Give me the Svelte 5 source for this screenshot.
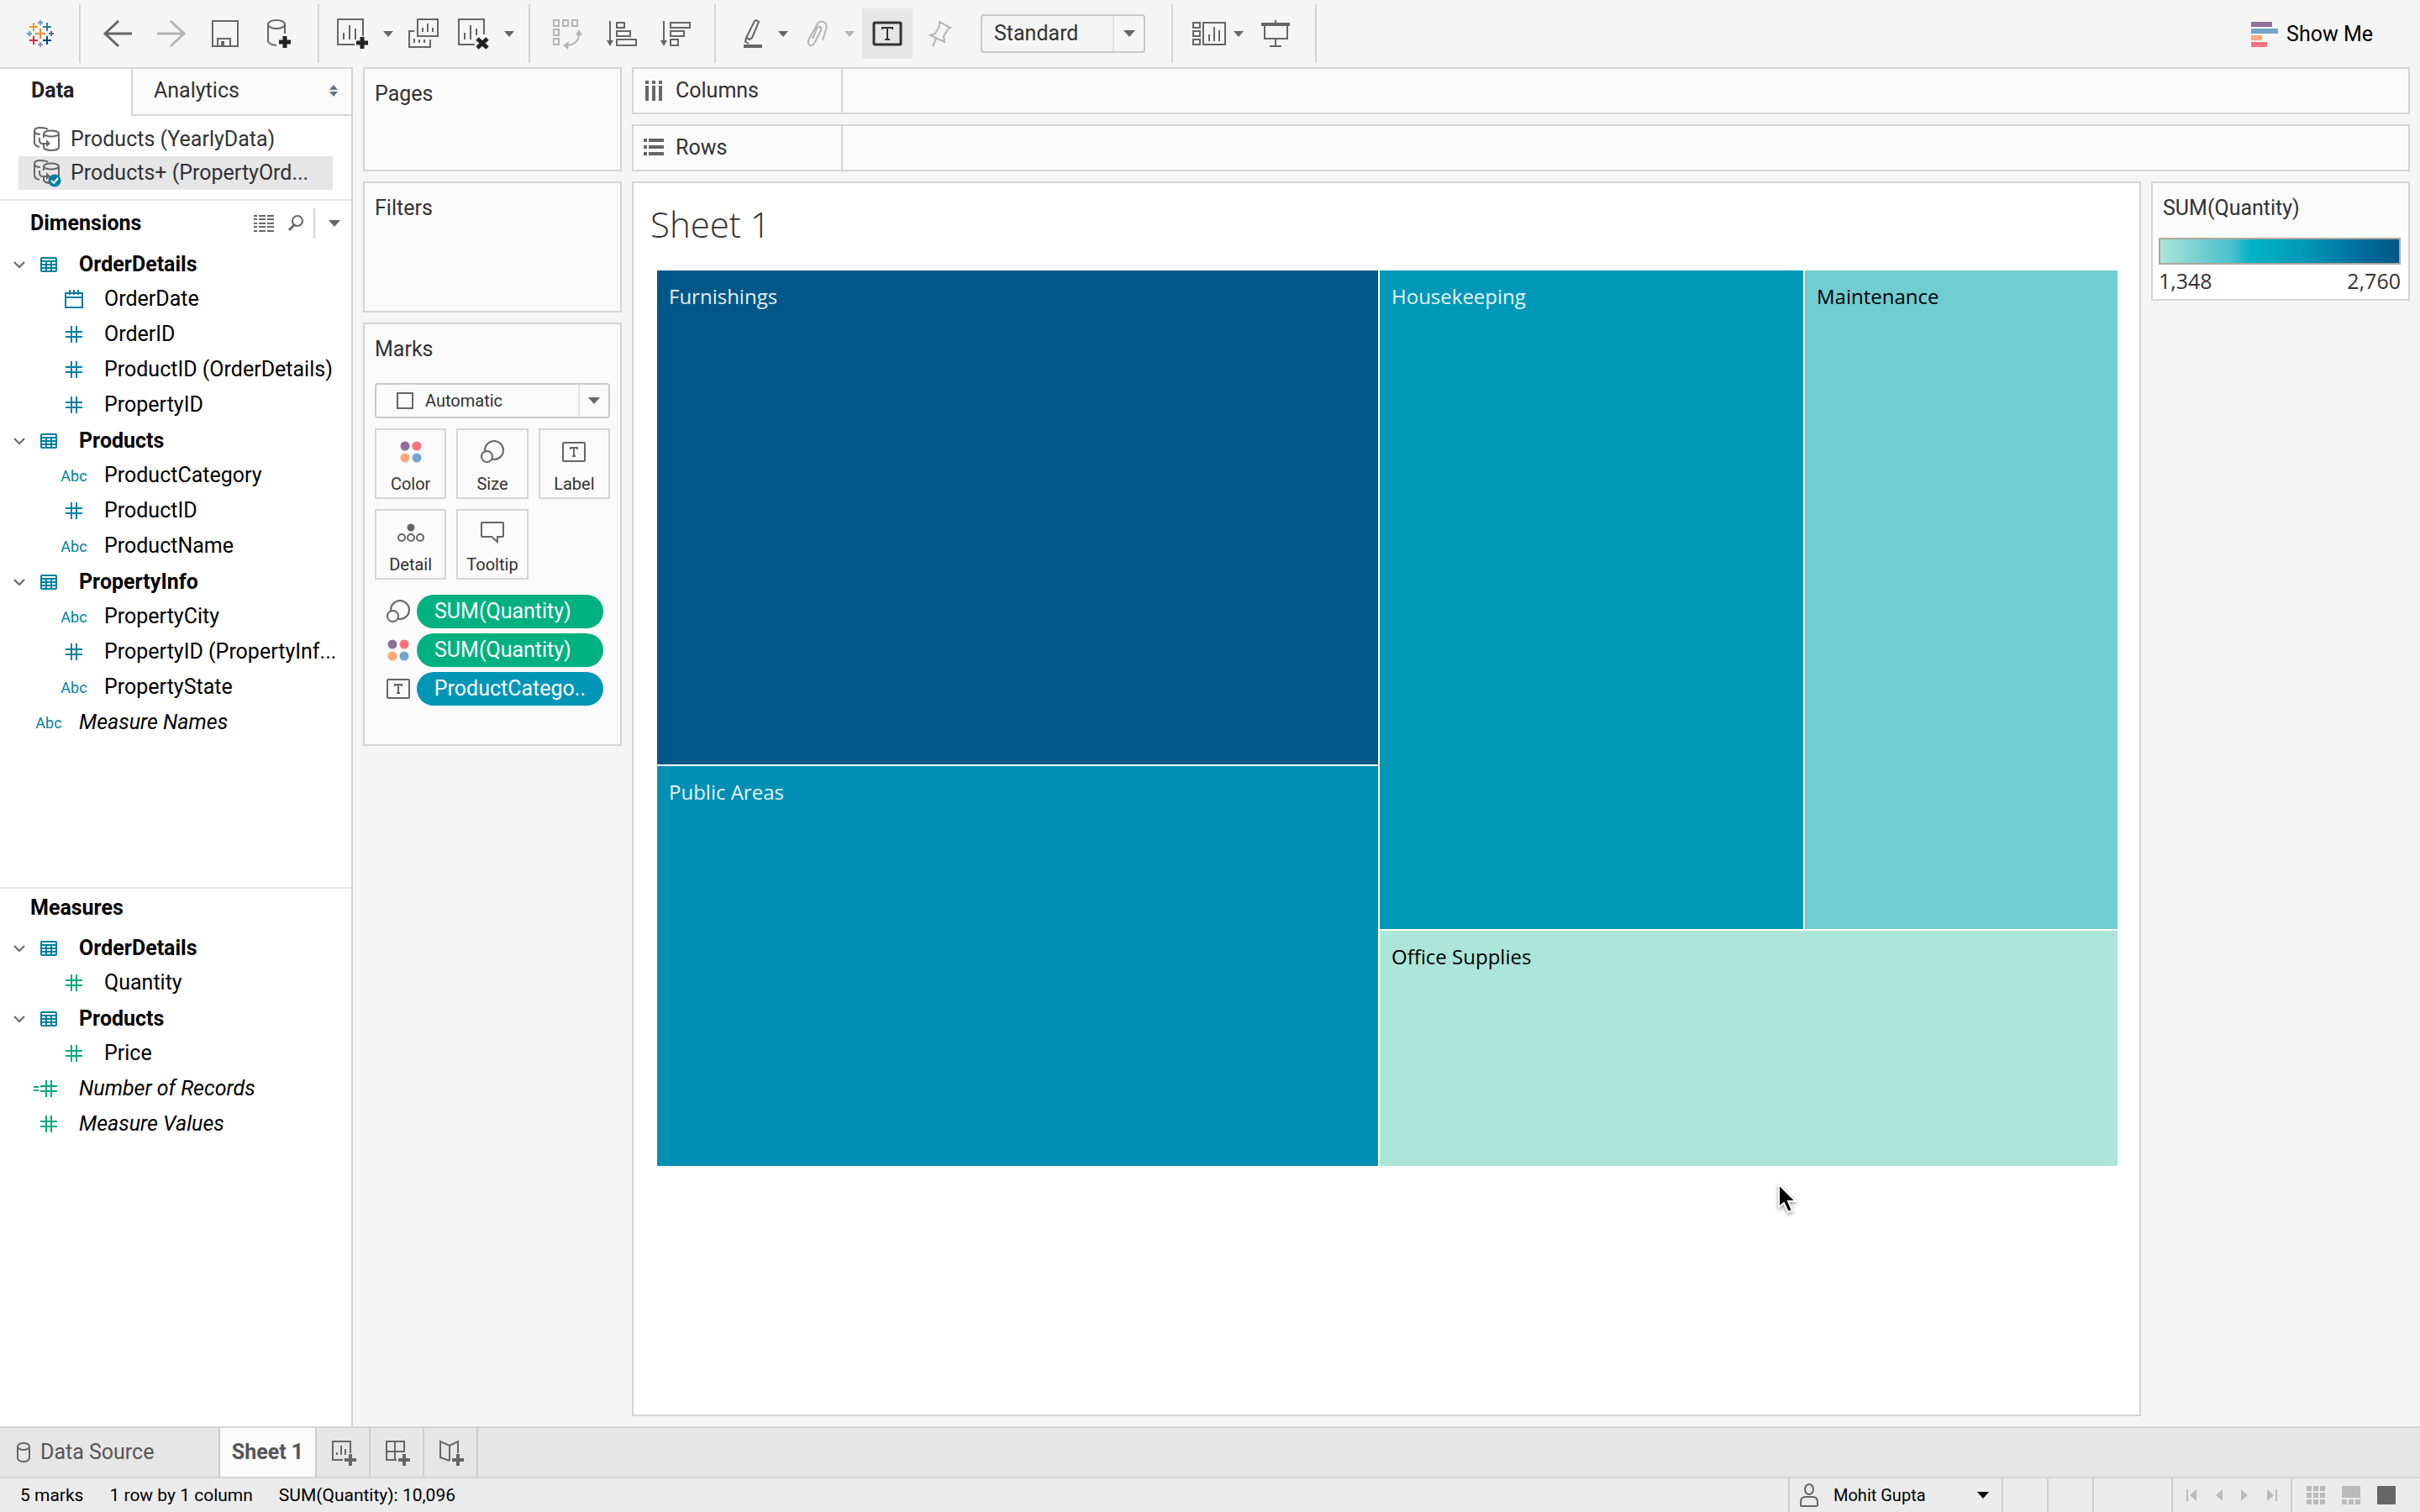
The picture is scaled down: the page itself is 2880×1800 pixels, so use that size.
<script lang="ts">
	type Field = { name: string; icon: string };
	type Group = { name: string; fields: Field[] };

	const dimensions: Group[] = [
		{
			name: 'OrderDetails',
			fields: [
				{ name: 'OrderDate', icon: 'date' },
				{ name: 'OrderID', icon: 'hash' },
				{ name: 'ProductID (OrderDetails)', icon: 'hash' },
				{ name: 'PropertyID', icon: 'hash' }
			]
		},
		{
			name: 'Products',
			fields: [
				{ name: 'ProductCategory', icon: 'abc' },
				{ name: 'ProductID', icon: 'hash' },
				{ name: 'ProductName', icon: 'abc' }
			]
		},
		{
			name: 'PropertyInfo',
			fields: [
				{ name: 'PropertyCity', icon: 'abc' },
				{ name: 'PropertyID (PropertyInf...', icon: 'hash' },
				{ name: 'PropertyState', icon: 'abc' }
			]
		}
	];
	const measures: Group[] = [
		{ name: 'OrderDetails', fields: [{ name: 'Quantity', icon: 'hash' }] },
		{ name: 'Products', fields: [{ name: 'Price', icon: 'hash' }] }
	];

	const tiles = {
		left: [
			{ name: 'Furnishings', size: 588, tone: 'navy' },
			{ name: 'Public Areas', size: 476, tone: 'ocean' }
		],
		top: [
			{ name: 'Housekeeping', size: 504, tone: 'teal' },
			{ name: 'Maintenance', size: 372, tone: 'aqua' }
		],
		bottom: { name: 'Office Supplies', size: 280, tone: 'mint' }
	};

	const encodings = ['Color', 'Size', 'Label', 'Detail', 'Tooltip'];
	const pills = [
		{ icon: 'Size', name: 'SUM(Quantity)', kind: 'measure' },
		{ icon: 'Color', name: 'SUM(Quantity)', kind: 'measure' },
		{ icon: 'Label', name: 'ProductCatego..', kind: 'dimension' }
	];

	let fit = $state('Standard');
	let mark = $state('Automatic');
</script>

{#snippet caret()}
	<svg class="caret" width="14" height="8" viewBox="0 0 14 8"><path d="M0 0h14L7 8z" /></svg>
{/snippet}

{#snippet smallCaret()}
	<svg class="caret" width="12" height="7" viewBox="0 0 12 7"><path d="M0 0h12L6 7z" /></svg>
{/snippet}

{#snippet database()}
	<path d="M8 1C3 1 1 3 1 5v14c0 2 2 4 6 5M1 6c1 2 3 3 7 3M8 1c4 0 7 .5 9 2" />
	<path d="M12 8v5M12 21v3c0 2 3 4 9 4s9-2 9-4V8M7 13v3q0 4 4 4h7" />
	<path d="M15 15l5 5-5 4z" class="solid thin" />
	<ellipse cx="21" cy="8" rx="9" ry="3.5" />
{/snippet}

{#snippet fieldIcon(kind)}
	<span class="field-icon">
		{#if kind === 'abc'}
			<span class="abc">Abc</span>
		{:else if kind === 'date'}
			<svg width="22" height="22" viewBox="0 0 22 22" class="line">
				<path d="M1 4h20v17H1zM1 9h20M6 0v6M11 0v6M16 0v6" />
			</svg>
		{:else if kind === 'table'}
			<svg width="20" height="18" viewBox="0 0 20 18">
				<rect width="20" height="18" rx="2" fill="#007fa3" />
				<path
					d="M2 2h16v2H2zM2 6h4v2H2zM8 6h4v2H8zM14 6h4v2h-4zM2 10h4v2H2zM8 10h4v2H8zM14 10h4v2h-4zM2 14h4v2H2zM8 14h4v2H8zM14 14h4v2h-4z"
					fill="#fff"
				/>
			</svg>
		{:else if kind === 'calc'}
			<svg width="36" height="20" viewBox="0 0 36 20" class="line">
				<path d="M15 0v20M21 0v20M8 7h20M8 13h20M0 8h6M0 12h6" />
			</svg>
		{:else}
			<svg width="20" height="20" viewBox="0 0 20 20" class="line">
				<path d="M7 0v20M13 0v20M0 7h20M0 13h20" />
			</svg>
		{/if}
	</span>
{/snippet}

{#snippet tree(groups)}
	{#each groups as group}
		<li class="group">
			<button class="row" aria-expanded="true">
				<svg class="chevron" width="14" height="9" viewBox="0 0 14 9"><path d="M1 1l6 6 6-6" /></svg>
				{@render fieldIcon('table')}
				<strong>{group.name}</strong>
			</button>
			<ul>
				{#each group.fields as field}
					<li class="row child">{@render fieldIcon(field.icon)}<span>{field.name}</span></li>
				{/each}
			</ul>
		</li>
	{/each}
{/snippet}

{#snippet encodingIcon(kind)}
	{#if kind === 'Color'}
		<svg width="26" height="26" viewBox="0 0 26 26">
			<circle cx="6" cy="6" r="5.5" fill="#8e6f9a" />
			<circle cx="20" cy="6" r="5.5" fill="#ff7080" />
			<circle cx="6" cy="20" r="5.5" fill="#ffa77a" />
			<circle cx="20" cy="20" r="5.5" fill="#71a5cc" />
		</svg>
	{:else if kind === 'Size'}
		<svg width="28" height="28" viewBox="0 0 28 28" class="line">
			<circle cx="16" cy="12" r="11" />
			<circle cx="7.5" cy="19.5" r="6.5" class="knock" />
		</svg>
	{:else if kind === 'Label'}
		<svg width="28" height="24" viewBox="0 0 28 24" class="line">
			<rect x="1" y="1" width="26" height="22" rx="1" />
			<path d="M10 9V7h8v2M14 7v10M12 17h4" />
		</svg>
	{:else if kind === 'Detail'}
		<svg width="32" height="22" viewBox="0 0 32 22" class="line">
			<circle cx="16" cy="5" r="4.5" class="solid thin" />
			<circle cx="5" cy="17" r="4" />
			<circle cx="16" cy="17" r="4" />
			<circle cx="27" cy="17" r="4" />
		</svg>
	{:else}
		<svg width="28" height="26" viewBox="0 0 28 26" class="line">
			<path d="M2 1h24q1 0 1 1v15q0 1-1 1h-6v6l-7-6H2q-1 0-1-1V2q0-1 1-1z" />
		</svg>
	{/if}
{/snippet}

{#snippet tile(item)}
	<div class="tile {item.tone}" style="flex-grow:{item.size}"><span>{item.name}</span></div>
{/snippet}

<div class="app">
	<header class="toolbar">
		<div class="tools logo">
			<button aria-label="Start page">
				<svg width="34" height="34" viewBox="0 0 34 34" stroke-width="2">
					<path d="M17 11v12M11 17h12" stroke="#f28a2e" />
					<path d="M9 4v10M4 9h10" stroke="#eb9a2c" />
					<path d="M25 4v10M20 9h10" stroke="#2a7f94" />
					<path d="M9 20v10M4 25h10" stroke="#e8223d" />
					<path d="M25 20v10M20 25h10" stroke="#16447e" />
					<path d="M17 1v6M14 4h6M4 14v6M1 17h6" stroke="#5ea0ae" />
					<path d="M30 14v6M27 17h6" stroke="#5b679e" />
					<path d="M17 27v6M14 30h6" stroke="#7f95bd" />
				</svg>
			</button>
		</div>
		<div class="tools history">
			<button aria-label="Undo">
				<svg width="34" height="32" viewBox="0 0 34 32" class="line bold"><path d="M18 1L2 16l16 15M2 16h32" /></svg>
			</button>
			<button aria-label="Redo" disabled>
				<svg width="34" height="32" viewBox="0 0 34 32" class="line bold"><path d="M16 1l16 15-16 15M32 16H0" /></svg>
			</button>
			<button aria-label="Save">
				<svg width="32" height="32" viewBox="0 0 32 32" class="line">
					<path d="M1 1h30v30H1zM7 31V22h15v9M12 31v-5M11 26h3v5" />
				</svg>
			</button>
			<button aria-label="New data source">
				<svg width="28" height="34" viewBox="0 0 28 34" class="line">
					<ellipse cx="11" cy="6" rx="10" ry="5" />
					<path d="M1 6v20q1 4 10 5M21 6v11" />
					<path d="M21 20v14M14 27h14" class="plus" />
				</svg>
			</button>
		</div>
		<div class="tools sheets">
			<button aria-label="New worksheet">
				<svg width="38" height="36" viewBox="0 0 38 36" class="line">
					<path d="M21 31H1V1h30v20M8 25v-8M15 25V8M22 25V12" />
					<path d="M30 22v14M23 29h14" class="plus" />
				</svg>
			</button>
			<button class="drop" aria-label="New worksheet options">{@render smallCaret()}</button>
			<button class="spaced" aria-label="Duplicate">
				<svg width="36" height="36" viewBox="0 0 36 36" class="line">
					<path d="M11 1h24v20H11zM17 16v-5M23 16V6M29 16v-5M7 15H1v19h25V25M7 29v-5M13 29v-4M19 29v-4" />
				</svg>
			</button>
			<button aria-label="Clear sheet">
				<svg width="38" height="36" viewBox="0 0 38 36" class="line">
					<path d="M20 31H1V1h30v18M8 25v-8M15 25V8M22 20v-8" />
					<path d="M23 24l12 11M35 24L23 35" class="plus" />
				</svg>
			</button>
			<button class="drop" aria-label="Clear sheet options">{@render smallCaret()}</button>
		</div>
		<div class="tools sorting">
			<button aria-label="Swap rows and columns" disabled>
				<svg width="36" height="36" viewBox="0 0 36 36" class="line">
					<path d="M1 2h6v7H1zM12 2h6v7h-6zM23 2h6v7h-6zM1 13h6v7H1zM1 24h6v7H1zM31 18q0 12-13 14" />
					<path d="M27 20l4-7 4 7zM19 27l-7 5 6 5z" class="solid thin" />
				</svg>
			</button>
			<button aria-label="Sort ascending">
				<svg width="36" height="32" viewBox="0 0 36 32" class="line">
					<path d="M4 1v24M12 3h9v6h-9zM12 13h16v6H12zM12 23h23v7H12z" />
					<path d="M0 24h8l-4 7z" class="solid thin" />
				</svg>
			</button>
			<button aria-label="Sort descending">
				<svg width="36" height="32" viewBox="0 0 36 32" class="line">
					<path d="M4 1v24M12 3h23v6H12zM12 13h16v6H12zM12 23h9v7h-9z" />
					<path d="M0 24h8l-4 7z" class="solid thin" />
				</svg>
			</button>
		</div>
		<div class="tools format">
			<button aria-label="Highlight">
				<svg width="24" height="34" viewBox="0 0 24 34" class="line">
					<path d="M13 2q2-2 5 1L10 22l-3 2-4-2zM3 22l-1 4M1 26l5 3" />
					<path d="M0 32h22" class="heavy" />
				</svg>
			</button>
			<button class="drop" aria-label="Highlight options">{@render smallCaret()}</button>
			<button class="clip" aria-label="Group members" disabled>
				<svg width="26" height="32" viewBox="0 0 26 32" class="line">
					<path d="M19 24l4-13q2-7-3-9-5-2-8 4L3 22q-3 6 1 8 4 1 6-4l7-14q1-3-1-4-2-1-4 2L7 22" />
				</svg>
			</button>
			<button class="drop narrow" aria-label="Group options" disabled>{@render smallCaret()}</button>
			<button class="active" aria-label="Show mark labels" aria-pressed="true">
				<svg width="34" height="28" viewBox="0 0 34 28" class="line">
					<rect x="1" y="1" width="32" height="26" rx="1" />
					<path d="M11 9V7h12v2M17 7v14M14 21h6" />
				</svg>
			</button>
			<button class="pin" aria-label="Fix axes" disabled>
				<svg width="28" height="32" viewBox="0 0 28 32" class="line">
					<path d="M13 2l13 7-3 2-5 8 1 7L2 18l6-2 5-9zM9 22L5 31" />
				</svg>
			</button>
			<label class="select fit">
				<select aria-label="Fit" bind:value={fit}>
					<option>Standard</option>
				</select>
				<span class="arrow">{@render caret()}</span>
			</label>
		</div>
		<div class="tools view">
			<button aria-label="Show or hide cards">
				<svg width="40" height="30" viewBox="0 0 40 30" class="line">
					<path d="M1 2h8v6H1zM1 12h8v6H1zM1 22h8v6H1zM13 2h26v26H13zM20 24v-8M26 24V7M32 24V11" />
				</svg>
			</button>
			<button class="drop short" aria-label="Card options">{@render smallCaret()}</button>
			<button class="present" aria-label="Presentation mode">
				<svg width="34" height="32" viewBox="0 0 34 32" class="line">
					<path d="M17 0v3M4 5v17h27V5M17 22v9M10 31h14" />
					<path d="M0 5h34" class="heavy" />
				</svg>
			</button>
		</div>
		<button class="show-me">
			<svg width="32" height="30" viewBox="0 0 32 30">
				<path d="M0 0h25v6H0z" fill="#8e6f9a" />
				<path d="M0 8h32v6H0z" fill="#71a5cc" />
				<path d="M0 16h13v6H0z" fill="#ffa77a" />
				<path d="M0 24h19v6H0z" fill="#ff7080" />
			</svg>
			Show Me
		</button>
	</header>

	<main>
		<aside class="sidebar">
			<div class="tabs" role="tablist">
				<button role="tab" aria-selected="true">Data</button>
				<button role="tab" aria-selected="false">
					Analytics
					<svg width="10" height="14" viewBox="0 0 10 14" fill="#5f7489"><path d="M5 0l5 6H0zM0 8h10l-5 6z" /></svg>
				</button>
			</div>
			<ul class="sources">
				<li>
					<svg width="32" height="30" viewBox="0 0 32 30" class="line">{@render database()}</svg>
					Products (YearlyData)
				</li>
				<li class="selected">
					<svg width="32" height="32" viewBox="0 0 32 32" class="line">
						{@render database()}
						<circle cx="25" cy="25" r="7.5" class="badge" />
						<path d="M21 25l3 3 5-6" stroke="#fff" />
					</svg>
					Products+ (PropertyOrd...
				</li>
			</ul>
			<section class="dimensions">
				<div class="section-head">
					<h2>Dimensions</h2>
					<button class="list-view" aria-label="View data">
						<svg width="24" height="20" viewBox="0 0 24 20" class="line">
							<path d="M0 1h24M0 5h24M0 10h24M0 14h24M0 19h24" stroke-dasharray="4 2 8 2 8 2" />
						</svg>
					</button>
					<button class="search" aria-label="Find field">
						<svg width="18" height="20" viewBox="0 0 18 20" class="line"><circle cx="11" cy="7" r="6" /><path d="M7 12l-6 6" class="bold" /></svg>
					</button>
					<button class="more" aria-label="Data pane options">{@render caret()}</button>
				</div>
				<ul>
					{@render tree(dimensions)}
					<li class="row root">{@render fieldIcon('abc')}<em>Measure Names</em></li>
				</ul>
			</section>
			<section class="measures">
				<div class="section-head"><h2>Measures</h2></div>
				<ul>
					{@render tree(measures)}
					<li class="row root">{@render fieldIcon('calc')}<em>Number of Records</em></li>
					<li class="row root">{@render fieldIcon('hash')}<em>Measure Values</em></li>
				</ul>
			</section>
		</aside>

		<div class="cards">
			<section class="card pages"><h3>Pages</h3></section>
			<section class="card filters"><h3>Filters</h3></section>
			<section class="card marks">
				<h3>Marks</h3>
				<label class="select mark-type">
					<svg class="shape line" width="20" height="20" viewBox="0 0 20 20"><rect x="1" y="1" width="18" height="18" /></svg>
					<select aria-label="Mark type" bind:value={mark}>
						<option>Automatic</option>
					</select>
					<span class="arrow">{@render caret()}</span>
				</label>
				<div class="encodings">
					{#each encodings as name}
						<button><span class="glyph">{@render encodingIcon(name)}</span>{name}</button>
					{/each}
				</div>
				<ul class="pills">
					{#each pills as pill}
						<li>
							<span class="glyph">{@render encodingIcon(pill.icon)}</span>
							<button class="pill {pill.kind}">{pill.name}</button>
						</li>
					{/each}
				</ul>
			</section>
		</div>

		<div class="workspace">
			<div class="shelf">
				<div class="shelf-name">
					<svg width="24" height="24" viewBox="0 0 24 24" fill="#666">
						<path d="M2 0h4v4H2zM10 0h4v4h-4zM18 0h4v4h-4zM2 6h4v18H2zM10 6h4v18h-4zM18 6h4v18h-4z" />
					</svg>
					Columns
				</div>
			</div>
			<div class="shelf">
				<div class="shelf-name">
					<svg width="24" height="22" viewBox="0 0 24 22" fill="#666">
						<path d="M0 0h4v4H0zM0 8h4v4H0zM0 16h4v4H0zM6 0h18v4H6zM6 8h18v4H6zM6 16h18v4H6z" />
					</svg>
					Rows
				</div>
			</div>
			<div class="canvas">
				<section class="sheet">
					<h1>Sheet 1</h1>
					<div class="treemap">
						<div class="stack left">
							{#each tiles.left as item}{@render tile(item)}{/each}
						</div>
						<div class="stack right">
							<div class="pair">
								{#each tiles.top as item}{@render tile(item)}{/each}
							</div>
							{@render tile(tiles.bottom)}
						</div>
					</div>
					<svg class="cursor" width="28" height="40" viewBox="0 0 28 40">
						<path d="M2 2v27l6-5 5 11 5-2-5-11h9z" fill="#000" stroke="#fff" stroke-width="2" />
					</svg>
				</section>
				<section class="card legend">
					<h3>SUM(Quantity)</h3>
					<div class="scale">
						<div class="ramp"></div>
						<div class="ends"><span>1,348</span><span>2,760</span></div>
					</div>
				</section>
			</div>
		</div>
	</main>

	<nav class="sheet-tabs">
		<button class="data-source">
			<svg width="16" height="24" viewBox="0 0 16 24" class="line">
				<ellipse cx="8" cy="5" rx="7" ry="4" />
				<path d="M1 5v14q1 4 7 4t7-4V5" />
			</svg>
			Data Source
		</button>
		<button class="current">Sheet 1</button>
		<button class="add" aria-label="New worksheet">
			<svg width="30" height="30" viewBox="0 0 30 30" class="line">
				<path d="M13 23H1V1h21v14M6 17v-3M11 17V6M16 17v-7" />
				<path d="M22 16v14M15 23h14" class="heavy" />
			</svg>
		</button>
		<button class="add" aria-label="New dashboard">
			<svg width="30" height="30" viewBox="0 0 30 30" class="line">
				<path d="M13 23H1V1h21v12H1M11 1v22" />
				<path d="M22 16v14M15 23h14" class="heavy" />
			</svg>
		</button>
		<button class="add" aria-label="New story">
			<svg width="30" height="30" viewBox="0 0 30 30" class="line">
				<path d="M12 24L1 20V1l11 5L22 1v14M12 6v18" />
				<path d="M22 16v14M15 23h14" class="heavy" />
			</svg>
		</button>
	</nav>

	<footer>
		<span>5 marks</span>
		<span>1 row by 1 column</span>
		<span>SUM(Quantity): 10,096</span>
		<div class="cells">
			<button class="cell user">
				<svg width="22" height="28" viewBox="0 0 22 28" class="line">
					<ellipse cx="11" cy="7" rx="5" ry="6" />
					<path d="M1 26v-4q0-6 6-6h8q6 0 6 6v4q0 1-1 1H2q-1 0-1-1z" />
				</svg>
				Mohit Gupta
				{@render caret()}
			</button>
			<div class="cell blank"></div>
			<div class="cell blank"></div>
			<div class="cell blank wide"></div>
			<div class="cell pager">
				<button aria-label="First sheet" disabled>
					<svg width="12" height="14" viewBox="0 0 12 14"><path d="M0 0h2v14H0zM12 0v14L4 7z" /></svg>
				</button>
				<button aria-label="Previous sheet" disabled>
					<svg width="8" height="14" viewBox="0 0 8 14"><path d="M8 0v14L0 7z" /></svg>
				</button>
				<button aria-label="Next sheet" disabled>
					<svg width="8" height="14" viewBox="0 0 8 14"><path d="M0 0v14l8-7z" /></svg>
				</button>
				<button aria-label="Last sheet" disabled>
					<svg width="12" height="14" viewBox="0 0 12 14"><path d="M10 0h2v14h-2zM0 0v14l8-7z" /></svg>
				</button>
			</div>
			<div class="cell layouts">
				<button aria-label="Sheet sorter">
					<svg width="22" height="22" viewBox="0 0 22 22">
						<path d="M0 0h6v6H0zM8 0h6v6H8zM16 0h6v6h-6zM0 8h6v6H0zM8 8h6v6H8zM16 8h6v6h-6zM0 16h6v6H0zM8 16h6v6H8zM16 16h6v6h-6z" />
					</svg>
				</button>
				<button aria-label="Filmstrip">
					<svg width="22" height="22" viewBox="0 0 22 22"><path d="M0 0h22v14H0zM0 16h6v6H0zM8 16h6v6H8zM16 16h6v6h-6z" /></svg>
				</button>
				<button class="on" aria-label="Sheet tabs">
					<svg width="22" height="22" viewBox="0 0 22 22"><rect width="22" height="22" rx="1" /></svg>
				</button>
			</div>
		</div>
	</footer>
</div>

<style>
	:global(body) {
		margin: 0;
	}
	.app {
		--line: #d4d4d4;
		--ink: #323232;
		--icon: #666;
		min-height: 100vh;
		display: flex;
		flex-direction: column;
		background: #f5f5f5;
		color: var(--ink);
		font: 25px/30px Roboto, 'Liberation Sans', sans-serif;
	}
	.app * {
		box-sizing: border-box;
	}
	button {
		padding: 0;
		border: 0;
		background: none;
		color: inherit;
		font: inherit;
	}
	ul {
		list-style: none;
		margin: 0;
		padding: 0;
	}
	h1,
	h2,
	h3 {
		margin: 0;
		font-size: 25px;
		font-weight: 400;
	}
	svg {
		display: block;
		flex: none;
		overflow: visible;
	}
	.line {
		fill: none;
		stroke: var(--icon);
		stroke-width: 2;
	}
	.bold {
		stroke-width: 3;
	}
	.heavy {
		stroke-width: 4;
	}
	.line .plus {
		stroke: #222;
		stroke-width: 5;
	}
	.line .solid {
		fill: var(--icon);
	}
	.line .thin {
		stroke: none;
	}
	.line .knock {
		fill: #fafafa;
	}
	.caret {
		fill: var(--icon);
	}
	button:disabled {
		--icon: #b4b4b4;
	}

	/* toolbar */
	.toolbar {
		height: 80px;
		display: flex;
		align-items: center;
	}
	.tools {
		height: 70px;
		display: flex;
		align-items: center;
		border-right: 2px solid var(--line);
	}
	.tools > button {
		display: flex;
		justify-content: center;
		align-items: center;
	}
	.logo {
		padding: 0 29px 0 31px;
	}
	.history {
		gap: 30px;
		padding: 0 29px 0 27px;
	}
	.history button {
		width: 34px;
	}
	.sheets {
		padding-left: 21px;
	}
	.sheets button {
		width: 38px;
	}
	.tools .drop {
		width: 46px;
		height: 60px;
	}
	.tools .narrow {
		width: 35px;
		padding-left: 4px;
	}
	.tools .short {
		width: 30px;
	}
	.sheets .spaced {
		margin-right: 22px;
	}
	.sorting {
		gap: 28px;
		padding: 0 28px 0 27px;
	}
	.format {
		padding: 0 31px 0 33px;
	}
	.clip {
		width: 36px;
	}
	.active {
		--icon: #323232;
		width: 60px;
		height: 60px;
		background: #e6e6e6;
	}
	.active rect {
		stroke-width: 3;
	}
	.pin {
		margin: 0 34px 0 19px;
	}
	.view {
		padding: 0 30px 0 23px;
	}
	.present {
		margin-left: 12px;
	}
	.show-me {
		margin-left: auto;
		padding: 2px 56px 0 0;
		display: flex;
		align-items: center;
		gap: 10px;
		color: #000;
	}

	/* drop-downs: the select fills the box, its arrow and icon lie over it */
	.select {
		display: grid;
		align-items: center;
	}
	.select select {
		grid-row: 1;
		grid-column: 1 / -1;
		width: 100%;
		height: 100%;
		appearance: none;
		border: 2px solid #c8c8c8;
		border-radius: 4px;
		background: none;
		color: inherit;
		font: inherit;
	}
	.select .arrow {
		grid-row: 1;
		height: calc(100% - 4px);
		margin-right: 2px;
		display: grid;
		place-items: center;
		border-left: 2px solid #e2e2e2;
		pointer-events: none;
	}
	.fit {
		width: 196px;
		height: 46px;
		grid-template-columns: 1fr 39px;
	}
	.fit select {
		padding: 0 14px;
	}
	.fit .arrow {
		grid-column: 2;
	}

	main {
		flex: 1;
		display: flex;
		gap: 12px;
		padding-right: 12px;
	}

	/* data pane */
	.sidebar {
		width: 420px;
		flex: none;
		display: flex;
		flex-direction: column;
		border: solid var(--line);
		border-width: 2px 2px 0 0;
		background: #fff;
	}
	.tabs {
		height: 56px;
		display: flex;
	}
	.tabs button {
		width: 156px;
		padding: 0 0 4px 37px;
		color: #222;
		font-weight: 700;
		text-align: left;
	}
	.tabs button + button {
		flex: 1;
		padding: 0 16px 2px 25px;
		display: flex;
		align-items: center;
		justify-content: space-between;
		border: solid var(--line);
		border-width: 0 0 2px 2px;
		background: #fafafa;
		color: var(--ink);
		font-weight: 400;
	}
	.sources {
		padding: 8px 22px 11px;
		border-bottom: 2px solid #e4e4e4;
	}
	.sources li {
		height: 40px;
		padding-left: 18px;
		display: flex;
		align-items: center;
		gap: 12px;
		white-space: nowrap;
	}
	.sources .selected {
		background: #e6e6e6;
	}
	.badge {
		fill: #007fa3;
		stroke: none;
	}
	.dimensions {
		flex: 1;
	}
	.measures {
		height: 642px;
		border-top: 2px solid #e4e4e4;
	}
	.section-head {
		height: 54px;
		padding-left: 36px;
		display: flex;
		align-items: center;
		color: #000;
	}
	.measures .section-head {
		height: 49px;
		padding-bottom: 4px;
	}
	.section-head h2 {
		flex: 1;
		font-weight: 700;
	}
	.list-view {
		margin-right: 17px;
	}
	.search {
		margin-right: 12px;
	}
	.more {
		height: 36px;
		padding: 0 13px 0 16px;
		border-left: 2px solid var(--line);
	}
	.row {
		width: 100%;
		height: 42px;
		display: flex;
		align-items: center;
		gap: 18px;
		color: #000;
		text-align: left;
		white-space: nowrap;
	}
	.group > .row {
		padding: 2px 0 0 16px;
	}
	.child {
		padding-left: 70px;
	}
	.root {
		padding-left: 40px;
	}
	.chevron {
		margin-right: -8px;
		fill: none;
		stroke: var(--icon);
		stroke-width: 2;
	}
	.field-icon {
		--icon: #007fa3;
		width: 36px;
		display: grid;
		place-items: center;
	}
	.measures .field-icon {
		--icon: #00a97c;
	}
	.abc {
		padding-top: 2px;
		color: var(--icon);
		font-size: 18px;
	}

	/* cards */
	.cards {
		width: 308px;
		flex: none;
		display: flex;
		flex-direction: column;
		gap: 12px;
	}
	.card {
		border: 2px solid var(--line);
		background: #fafafa;
		padding: 15px 12px;
	}
	.pages {
		height: 124px;
	}
	.filters {
		height: 156px;
	}
	.marks {
		padding-bottom: 46px;
		font-size: 20px;
	}
	.mark-type {
		height: 42px;
		margin: 25px 0 12px;
		grid-template-columns: 46px 1fr 38px;
	}
	.mark-type .shape {
		grid-row: 1;
		grid-column: 1;
		justify-self: end;
	}
	.mark-type .arrow {
		grid-column: 3;
	}
	.mark-type select {
		padding: 0 58px;
	}
	.encodings {
		display: grid;
		grid-template-columns: repeat(3, 1fr);
		gap: 12px;
	}
	.encodings button {
		height: 84px;
		padding-top: 2px;
		border: 2px solid var(--line);
	}
	.glyph {
		display: grid;
		place-items: center;
	}
	.encodings .glyph {
		height: 46px;
	}
	.pills {
		margin-top: 18px;
		padding: 0 8px 0 12px;
		display: flex;
		flex-direction: column;
		gap: 6px;
		font-size: 25px;
	}
	.pills li {
		display: flex;
		gap: 6px;
	}
	.pills .glyph {
		width: 32px;
	}
	.pill {
		flex: 1;
		height: 40px;
		padding: 0 21px;
		border-radius: 20px;
		color: #fff;
		text-align: left;
		white-space: nowrap;
	}
	.measure {
		background: #00b180;
	}
	.dimension {
		background: #0096b8;
	}

	/* worksheet */
	.workspace {
		flex: 1;
		display: flex;
		flex-direction: column;
		gap: 12px;
		padding-bottom: 12px;
	}
	.shelf {
		height: 56px;
		display: flex;
		border: 2px solid var(--line);
		background: #fafafa;
	}
	.shelf-name {
		width: 249px;
		padding-left: 12px;
		display: flex;
		align-items: center;
		gap: 14px;
		border-right: 2px solid var(--line);
	}
	.canvas {
		flex: 1;
		display: flex;
		align-items: flex-start;
		gap: 12px;
	}
	.sheet {
		position: relative;
		flex: 1;
		align-self: stretch;
		border: 2px solid var(--line);
		background: #fff;
	}
	h1 {
		padding: 25px 20px 31px;
		font: 300 42px/48px 'Open Sans', sans-serif;
	}
	.treemap {
		height: 1066px;
		margin: 0 26px 0 28px;
		display: flex;
		gap: 2px;
		font: 24px/30px 'Open Sans', sans-serif;
	}
	.stack {
		flex: 878 1 0;
		display: flex;
		flex-direction: column;
		gap: 2px;
	}
	.stack.left {
		flex-grow: 858;
	}
	.pair {
		flex: 784 1 0;
		display: flex;
		gap: 2px;
	}
	.tile {
		flex: 1 1 0;
		color: #000;
	}
	.tile span {
		display: block;
		padding: 16px 14px;
	}
	.navy {
		background: #005889;
		color: #e6eef3;
	}
	.ocean {
		background: #008fb4;
		color: #e6f4f8;
	}
	.teal {
		background: #0098b9;
		color: #e6f5f8;
	}
	.aqua {
		background: #70cdd0;
	}
	.mint {
		background: #abe6d8;
	}
	.cursor {
		position: absolute;
		left: 1361px;
		top: 1190px;
		filter: drop-shadow(0 2px 2px #0006);
	}
	.legend {
		width: 308px;
		padding: 0;
	}
	.legend h3 {
		height: 58px;
		padding: 15px 12px 0;
	}
	.scale {
		padding: 7px 9px 8px 7px;
		background: #fff;
	}
	.ramp {
		height: 32px;
		border: 2px solid #aea79a;
		background: linear-gradient(90deg, #abe6d8, #70cdd0 18%, #4ac2cf 30%, #00b3c6 38%, #0098b9 60%, #00699b 86%, #005889);
	}
	.ends {
		margin-top: 5px;
		display: flex;
		justify-content: space-between;
		font: 25px/28px 'Open Sans', sans-serif;
	}

	/* bottom bars */
	.sheet-tabs {
		height: 62px;
		display: flex;
		border: solid var(--line);
		border-width: 2px 0;
		background: #e6e6e6;
		color: #555;
	}
	.sheet-tabs button {
		display: flex;
		align-items: center;
		justify-content: center;
		border-right: 2px solid #ccc;
	}
	.sheet-tabs .data-source {
		width: 262px;
		padding-left: 20px;
		justify-content: flex-start;
		gap: 12px;
	}
	.sheet-tabs .current {
		width: 115px;
		background: #fafafa;
		font-weight: 700;
	}
	.sheet-tabs .add {
		width: 64px;
		padding: 2px 0 0 3px;
	}
	footer {
		height: 40px;
		padding-left: 24px;
		display: flex;
		align-items: center;
		gap: 31px;
		background: #ebebeb;
		color: #000;
		font-size: 21px;
	}
	.cells {
		margin-left: auto;
		display: flex;
	}
	.cell {
		height: 40px;
		display: flex;
		align-items: center;
		border-left: 2px solid #ccc;
	}
	.user {
		width: 254px;
		padding: 0 15px 0 12px;
		gap: 18px;
		font-size: 20px;
	}
	.user .caret {
		margin-left: auto;
		fill: #000;
	}
	.blank {
		width: 54px;
	}
	.wide {
		width: 94px;
	}
	.pager {
		width: 142px;
		padding: 0 16px;
		justify-content: space-between;
		fill: #bbb;
	}
	.layouts {
		width: 154px;
		padding: 0 29px 0 17px;
		justify-content: space-between;
		fill: #bbb;
	}
	.on {
		fill: #666;
	}
</style>
